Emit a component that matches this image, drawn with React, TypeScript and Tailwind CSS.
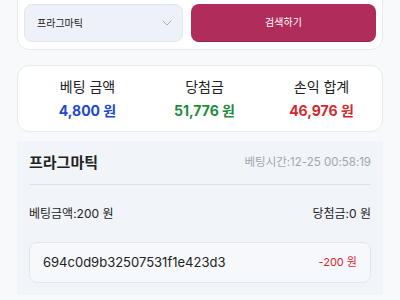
import React from "react";

export default function App() {
  return (
    <div
      className="w-[400px] h-[300px] overflow-hidden bg-[#f8f9fb] px-[17px]"
      style={{ fontFamily: 'Inter, "Noto Sans CJK KR", sans-serif' }}
    >
      <div className="-mt-[4px] rounded-b-xl border border-[#e6e9ee] bg-white px-[6px] pt-[7px] pb-[7px] flex gap-[8px]">
        <div className="w-[159px] h-[38px] rounded-lg border border-[#e1e6ee] bg-[#eef2f8] flex items-center justify-between pl-[12px] pr-[10px]">
          <span className="text-[10px] text-[#222]">프라그마틱</span>
          <svg width="10" height="6" viewBox="0 0 10 6" fill="none">
            <path d="M1 1l4 4 4-4" stroke="#a5abb4" strokeWidth="1" strokeLinecap="round" strokeLinejoin="round" />
          </svg>
        </div>
        <div className="flex-1 h-[38px] rounded-lg bg-[#b02c5b] border-b border-[#9a1f4a] flex items-center justify-center">
          <span className="text-[10px] text-white">검색하기</span>
        </div>
      </div>

      <div className="mt-[15px] h-[67px] rounded-xl border border-[#e6e9ee] bg-white grid grid-cols-3 pt-[11px] pl-[11px] pr-[2px]">
        <div className="flex flex-col items-center gap-[4px]">
          <span className="text-[14px] text-[#222] leading-[20px]">베팅 금액</span>
          <span className="text-[14px] font-bold text-[#1d47d4] leading-[20px]">4,800 원</span>
        </div>
        <div className="flex flex-col items-center gap-[4px]">
          <span className="text-[14px] text-[#222] leading-[20px]">당첨금</span>
          <span className="text-[14px] font-bold text-[#1f8a3b] leading-[20px]">51,776 원</span>
        </div>
        <div className="flex flex-col items-center gap-[4px]">
          <span className="text-[14px] text-[#222] leading-[20px]">손익 합계</span>
          <span className="text-[14px] font-bold text-[#d2292f] leading-[20px]">46,976 원</span>
        </div>
      </div>

      <div className="mt-[9px] bg-[#f1f4f9] px-[12px] pb-[12px]">
        <div className="h-[44px] flex items-center justify-between border-b border-[#dde2ea] pt-[1px]">
          <span className="text-[15px] font-semibold text-[#222]">프라그마틱</span>
          <span className="text-[11.5px] text-[#a0a6ae]">베팅시간:12-25 00:58:19</span>
        </div>
        <div className="h-[57px] flex items-center justify-between">
          <span className="text-[12px] text-[#222]">베팅금액:200 원</span>
          <span className="text-[12px] text-[#222]">당첨금:0 원</span>
        </div>
        <div className="h-[41px] rounded-lg border border-[#e2e6ec] bg-[#f6f8fb] flex items-center justify-between pl-[13px] pr-[13px]">
          <span className="text-[13px] text-[#222]">694c0d9b32507531f1e423d3</span>
          <span className="text-[11px] text-[#d2292f]">-200 원</span>
        </div>
      </div>
    </div>
  );
}
